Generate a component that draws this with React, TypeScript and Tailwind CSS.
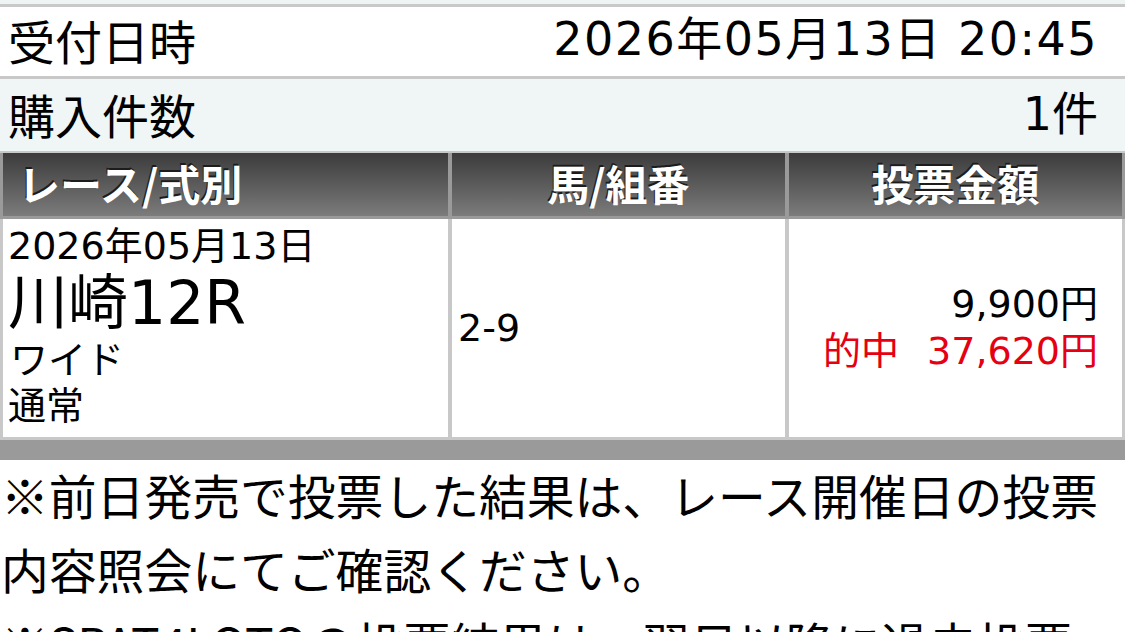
import React from 'react';

const FONT = { fontFamily: '"DejaVu Sans", "Noto Sans CJK JP", sans-serif' };
const JP = { fontFamily: '"Noto Sans CJK JP", "Noto Sans", sans-serif' };

export default function App() {
  return (
    <div className="w-[1125px] h-[632px] overflow-hidden bg-white text-black" style={FONT}>
      {/* top strip */}
      <div className="h-[4px] bg-[#eef3f4]" />

      {/* summary rows */}
      <div className="border-t-[3px] border-[#c8c8c8] bg-white h-[72px] flex items-center justify-between pl-[8px] pr-[27px] pb-[5px] text-[47px] leading-none">
        <span style={JP}>受付日時</span>
        <span className="text-[46px] tracking-[1.5px]">2026年05月13日 20:45</span>
      </div>
      <div className="border-t-[3px] border-[#c8c8c8] bg-[#f0f5f6] h-[75px] flex items-center justify-between pl-[8px] pr-[27px] pb-[3px] text-[47px] leading-none">
        <span style={JP}>購入件数</span>
        <span className="text-[46px]">1件</span>
      </div>

      {/* table header */}
      <div
        className="border-t-[2px] border-[#c8c8c8] grid grid-cols-[445px_333px_333px] gap-x-[4px] bg-[#9a9a9a] px-[3px] pb-[3px]"
        style={JP}
      >
        {['レース/式別', '馬/組番', '投票金額'].map((h, i) => (
          <div
            key={h}
            className={`h-[63px] flex items-center pb-[4px] bg-gradient-to-b from-[#3c3c3c] to-[#7c7c7c] text-white font-bold text-[42px] leading-none [text-shadow:-1px_-2px_0_#1c1c1c] ${
              i === 0 ? 'justify-start pl-[15px]' : 'justify-center'
            }`}
          >
            {h}
          </div>
        ))}
      </div>

      {/* data row */}
      <div className="grid grid-cols-[445px_333px_333px] gap-x-[4px] bg-[#c8c8c8] px-[3px] pb-[3px]">
        <div className="bg-white h-[218px] pl-[5px] pt-[4px] text-[38px]">
          <div className="leading-[46px]">2026年05月13日</div>
          <div className="text-[60px] leading-[68px]">川崎12R</div>
          <div className="leading-[46px] pl-[2px]">ワイド</div>
          <div className="leading-[46px]">通常</div>
        </div>
        <div className="bg-white h-[218px] flex items-center pl-[6px] text-[38px]">2-9</div>
        <div className="bg-white h-[218px] flex flex-col items-end justify-center pr-[24px] text-[38px] leading-[47px]">
          <div>9,900円</div>
          <div className="text-[#e50012]">
            的中<span className="ml-[28px]">37,620円</span>
          </div>
        </div>
      </div>

      {/* gray bar */}
      <div className="h-[20px] bg-[#9a9a9a]" />

      {/* notes */}
      <div className="pl-[1px] text-[47.8px] leading-[74px] -mt-[2px]" style={JP}>
        <p>※前日発売で投票した結果は、レース開催日の投票</p>
        <p>内容照会にてご確認ください。</p>
        <p>※SPAT4LOTOの投票結果は、翌日以降に過去投票</p>
      </div>
    </div>
  );
}
